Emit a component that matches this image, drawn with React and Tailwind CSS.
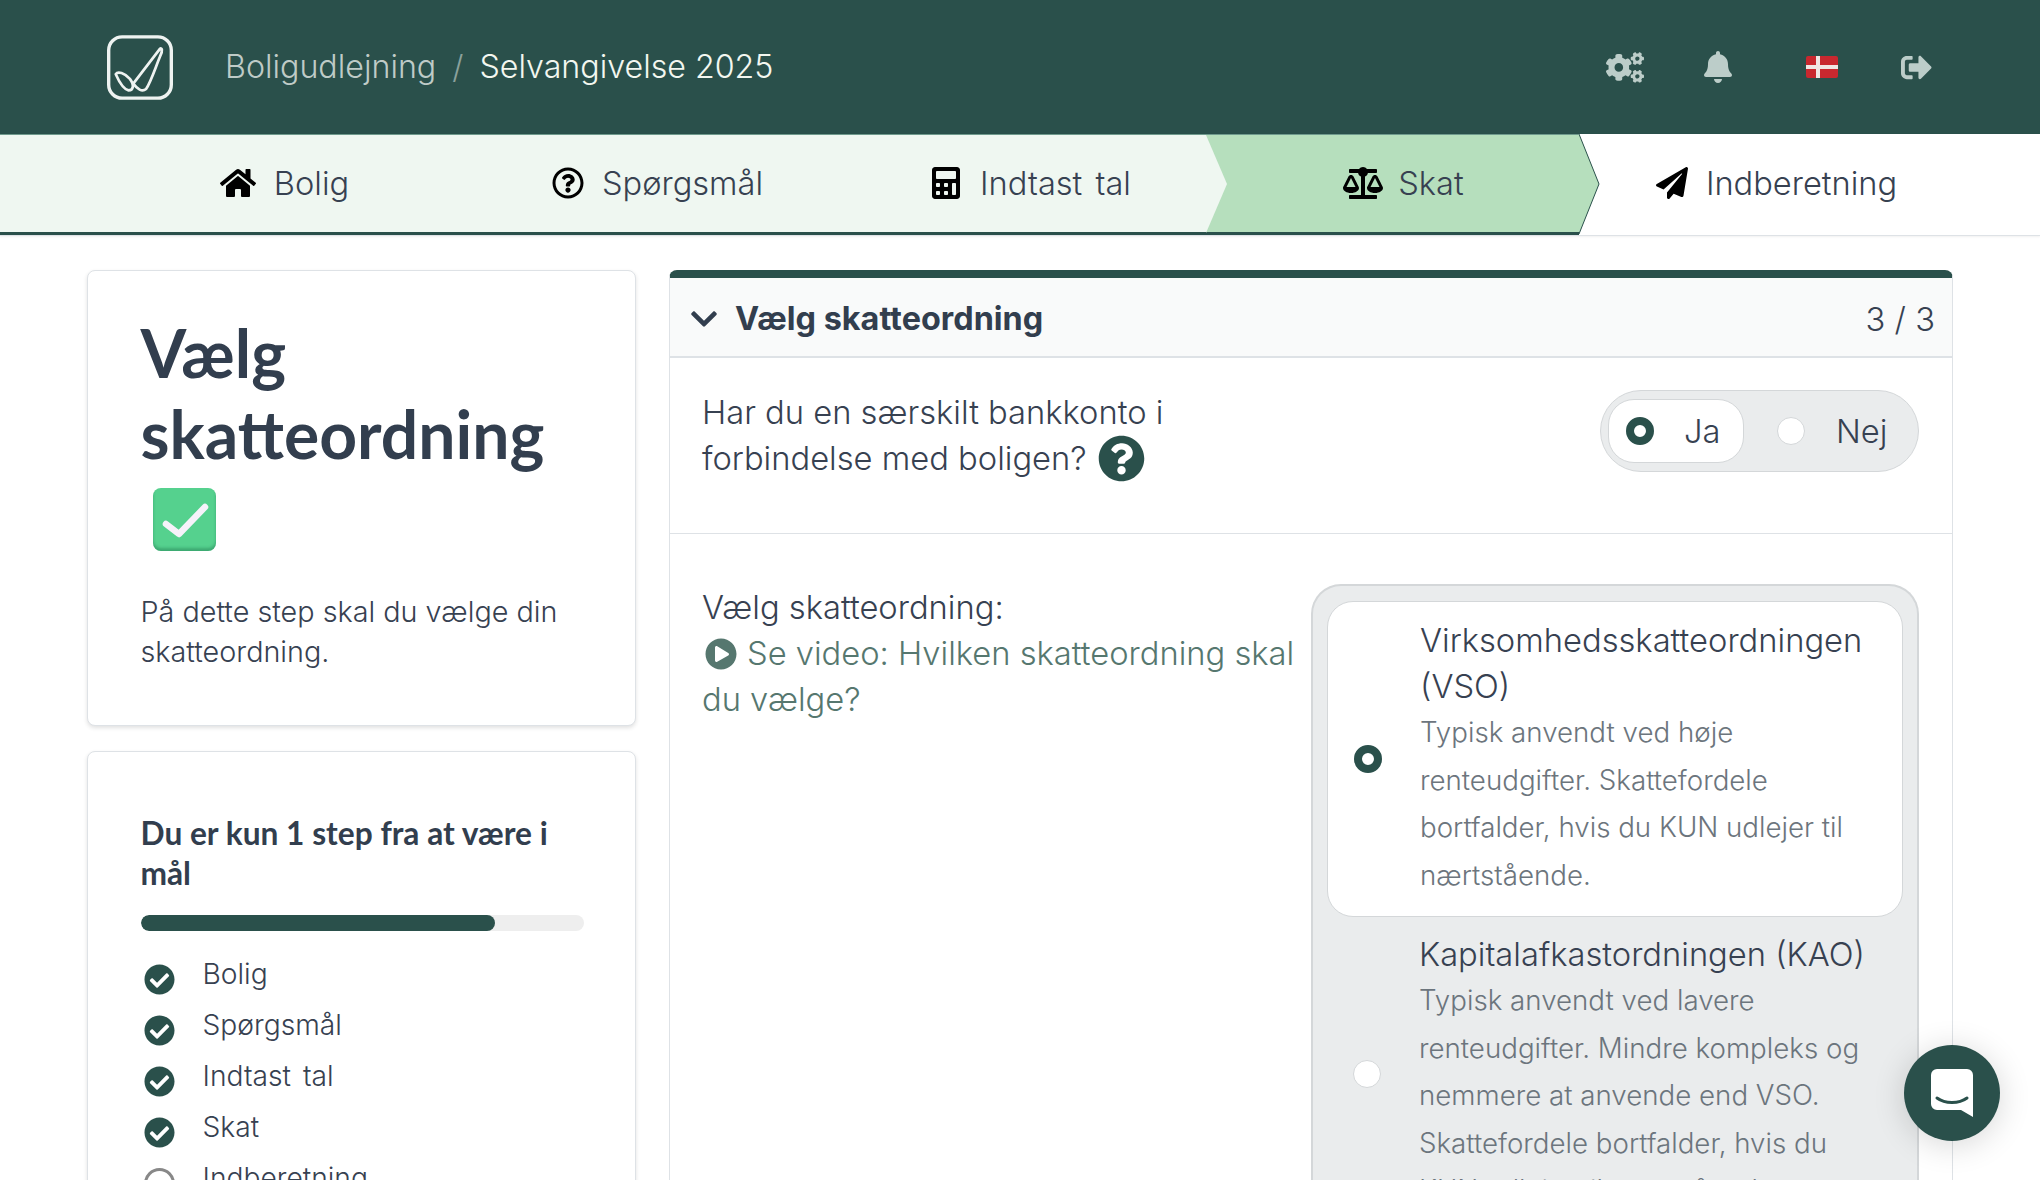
import React from "react";
import { FaHome, FaRegQuestionCircle, FaCalculator, FaBalanceScale, FaPaperPlane, FaCogs, FaBell, FaSignOutAlt, FaCheckCircle, FaQuestionCircle, FaPlayCircle, FaChevronDown } from "react-icons/fa";

const Logo = () => (
  <svg viewBox="82 44 196 192" className="w-[66px] h-[65px]" fill="none" stroke="#eef3f1" strokeWidth="10">
    <rect x="87" y="49" width="186" height="182" rx="40" />
    <path strokeWidth="8" strokeLinejoin="round" d="M108 160 C114 150 134 156 150 174 C164 192 160 208 146 208 C130 204 116 178 108 160 Z M160 188 L238 86 C246 78 248 90 240 106 C226 140 212 184 198 204 C186 214 172 204 160 188 Z" />
  </svg>
);

const Flag = () => (
  <svg viewBox="0 0 32 22" className="w-[32px] h-[22px]">
    <rect width="32" height="22" rx="2" fill="#c8282f" />
    <rect x="10" width="4" height="22" fill="#f0e6e4" />
    <rect y="9" width="32" height="4" fill="#f0e6e4" />
  </svg>
);

const Step = ({ icon, label, tip, className }) => (
  <div className={"relative flex-1 flex items-center justify-center pl-[22px] pb-[2px] gap-[18px] border-t border-b-[3px] [word-spacing:4px] " + className}>
    {icon}
    <span>{label}</span>
    {tip}
  </div>
);

const Radio = ({ on }) => (
  <span className={"block shrink-0 w-[28px] h-[28px] rounded-full " + (on ? "border-[8px] border-[#2a504b] bg-white" : "border border-[#d4d7d9] bg-white")} />
);

const ListItem = ({ label, done }) => (
  <div className="flex h-[51px]">
    <div className="w-[62px] pl-[3px] pt-[10px] shrink-0">
      {done ? <FaCheckCircle className="text-[31px] text-[#2a504b]" /> : <span className="block w-[31px] h-[31px] rounded-full border-[3px] border-[#888]" />}
    </div>
    <span className="text-[28.2px] [word-spacing:4px]">{label}</span>
  </div>
);

const doneStep = "bg-[#eff7f1] border-t-[#6f9a8d] border-b-[#2a504b]";

export default function App() {
  return (
    <div className="relative h-[1180px] w-full overflow-hidden bg-white text-[#374151] font-['Inter',sans-serif] font-[350] text-[28.75px] leading-[40px]">
      <header className="h-[134px] bg-[#2a504b] flex items-center pl-[107px] pr-[108px]">
        <Logo />
        <div className="ml-[52px] flex items-center text-[32.2px] leading-[48px] text-[#f3f7f0]">
          <span className="text-[#bfcbc7]">Boligudlejning</span>
          <span className="mx-[16px] text-[#8aa19c]">/</span>
          <span>Selvangivelse 2025</span>
        </div>
        <div className="ml-auto flex items-center text-[#bccdc9]">
          <FaCogs className="w-[38px] h-[31px]" />
          <FaBell className="w-[30px] h-[32px] ml-[59px]" />
          <span className="ml-[73px] flex"><Flag /></span>
          <FaSignOutAlt className="text-[31px] ml-[63px]" />
        </div>
      </header>

      <nav className="h-[102px] flex text-[32.6px] leading-[48px] border-b border-[#dee2e6] shadow-[0_1px_2px_rgba(0,0,0,0.06)]">
        <div className="w-[87px] bg-[#eff7f1] border-t border-b-[3px] border-t-[#6f9a8d] border-b-[#2a504b]" />
        <Step className={doneStep} icon={<FaHome className="text-black text-[32px] w-[36px] h-[32px]" />} label="Bolig" />
        <Step className={doneStep} icon={<FaRegQuestionCircle className="text-black text-[32px]" />} label="Spørgsmål" />
        <Step
          className={doneStep + " z-[2]"}
          icon={<FaCalculator className="text-black text-[32px]" />}
          label="Indtast tal"
          tip={<svg className="absolute left-full top-[-1px] h-[102px] w-[21px]" viewBox="0 0 21 102" preserveAspectRatio="none"><polygon points="0,1 21,50 0,99" fill="#eff7f1" /></svg>}
        />
        <Step
          className="bg-[#b6dfbd] border-t-[#6f9a8d] border-b-[#2a504b] z-[1]"
          icon={<FaBalanceScale className="text-black w-[40px] h-[32px] -mr-[3px]" />}
          label="Skat"
          tip={<svg className="absolute left-full top-[-1px] h-[102px] w-[21px]" viewBox="0 0 21 102" preserveAspectRatio="none"><polygon points="0,0 20,50 0,100" fill="#b6dfbd" /><polyline points="0,0 20,50 0,100" fill="none" stroke="#2a504b" strokeWidth="1" /></svg>}
        />
        <Step className="bg-white border-t-white border-b-transparent" icon={<FaPaperPlane className="text-black text-[32px]" />} label="Indberetning" />
        <div className="w-[88px]" />
      </nav>

      <main className="flex pl-[87px] pt-[34px] gap-[33px]">
        <aside className="w-[549px] shrink-0 flex flex-col gap-[25px]">
          <section className="h-[456px] bg-white border border-[#dee2e6] rounded-[8px] shadow-[0_2px_4px_rgba(0,0,0,0.12)] px-[52.5px] pt-[41px]">
            <h1 className="font-['Lato',sans-serif] font-bold text-[66px] leading-[81px] text-[#323e4e]">Vælg skatteordning</h1>
            <div className="ml-[12px] mt-[14px] w-[63px] h-[63px] rounded-[8px] bg-[#55d18e] shadow-[inset_0_-3px_3px_rgba(30,120,80,0.45)] flex items-center justify-center">
              <svg viewBox="0 0 63 63" className="w-[63px] h-[63px]" fill="none" stroke="#f6f2fa" strokeWidth="6.5" strokeLinecap="round" strokeLinejoin="round"><path d="M13 36 L26 46 L52 19" /></svg>
            </div>
            <p className="mt-[41px]">På dette step skal du vælge din skatteordning.</p>
          </section>
          <section className="bg-white border border-[#dee2e6] rounded-[8px] shadow-[0_2px_4px_rgba(0,0,0,0.12)] px-[52.5px] pt-[61px] h-[600px]">
            <h2 className="font-['Lato',sans-serif] font-bold text-[31.7px] leading-[40px] text-[#323e4e]">Du er kun 1 step fra at være i mål</h2>
            <div className="mt-[22px] h-[16px] w-[443px] rounded-full bg-[#eeeeee] overflow-hidden">
              <div className="h-full w-[80%] rounded-full bg-[#2a504b]" />
            </div>
            <div className="mt-[23px]">
              <ListItem label="Bolig" done />
              <ListItem label="Spørgsmål" done />
              <ListItem label="Indtast tal" done />
              <ListItem label="Skat" done />
              <ListItem label="Indberetning" />
            </div>
          </section>
        </aside>

        <section className="w-[1284px] shrink-0 border border-[#dee2e6] border-t-[8px] border-t-[#2a504b] rounded-[8px] bg-white h-[1000px] text-[32.7px] leading-[46px]">
          <div className="h-[80px] bg-[#f9fafa] border-b-2 border-[#dee2e6] flex items-center pl-[19px] pr-[17px] pt-[3px]">
            <FaChevronDown className="text-[30px] text-[#323e4e]" />
            <span className="ml-[16px] font-bold text-[32.4px] text-[#323e4e]">Vælg skatteordning</span>
            <span className="ml-auto">3 / 3</span>
          </div>
          <div className="h-[176px] border-b border-[#dee2e6] flex justify-between pl-[32px] pr-[33px] pt-[31px]">
            <div className="w-[520px]">
              Har du en særskilt bankkonto i forbindelse med boligen?
              <FaQuestionCircle className="inline-block text-[47px] text-[#2a504b] ml-[11px] align-[-12px]" />
            </div>
            <div className="mt-[1px] w-[319px] h-[82px] rounded-full bg-[#eaeced] border border-[#d4d7d9] p-[7px] flex items-center">
              <div className="w-[136px] h-[64px] rounded-[26px] bg-white border border-[#d4d7d9] flex items-center pl-[17px]">
                <Radio on />
                <span className="ml-[30px]">Ja</span>
              </div>
              <div className="flex items-center ml-[33px]">
                <Radio />
                <span className="ml-[31px]">Nej</span>
              </div>
            </div>
          </div>
          <div className="flex pl-[32px] pr-[33px] pt-[50px]">
            <div className="w-[609px] shrink-0">
              <div>Vælg skatteordning:</div>
              <div className="text-[#56776f]">
                <FaPlayCircle className="inline-block text-[32px] mr-[10px] ml-[3px] align-[-5px]" />
                Se video: Hvilken skatteordning skal du vælge?
              </div>
            </div>
            <div className="w-[608px] rounded-[30px] bg-[#eaeced] border-2 border-[#d4d7d9] border-b-0 px-[14px] pt-[15px] h-[700px]">
              <div className="bg-white border border-[#d4d7d9] rounded-[26px] flex items-center pl-[26px] pr-[23px] pt-[15px] pb-[17px]">
                <span className="mt-[2px]"><Radio on /></span>
                <div className="ml-[38px]">
                  <div>Virksomhedsskatteordningen (VSO)</div>
                  <div className="text-[27.7px] leading-[47.5px] text-[#6c757d]">Typisk anvendt ved høje renteudgifter. Skattefordele bortfalder, hvis du KUN udlejer til nærtstående.</div>
                </div>
              </div>
              <div className="flex items-center pl-[26px] pr-[23px] pt-[14px]">
                <span className="mt-[2px]"><Radio /></span>
                <div className="ml-[38px]">
                  <div>Kapitalafkastordningen (KAO)</div>
                  <div className="text-[27.7px] leading-[47.5px] text-[#6c757d]">Typisk anvendt ved lavere renteudgifter. Mindre kompleks og nemmere at anvende end VSO. Skattefordele bortfalder, hvis du KUN udlejer til nærtstående.</div>
                </div>
              </div>
            </div>
          </div>
        </section>
      </main>

      <button className="absolute right-[40px] bottom-[39px] w-[96px] h-[96px] rounded-full bg-[#2a504b] flex items-center justify-center shadow-[0_4px_32px_rgba(0,0,0,0.16)]">
        <svg viewBox="0 0 42 48" className="w-[42px] h-[48px]">
          <path d="M6 0 H36 A6 6 0 0 1 42 6 V48 L30 41 H6 A6 6 0 0 1 0 35 V6 A6 6 0 0 1 6 0 Z" fill="#fff" />
          <path d="M6 29 C14 35 28 35 36 29" fill="none" stroke="#2a504b" strokeWidth="3" strokeLinecap="round" />
        </svg>
      </button>
    </div>
  );
}
